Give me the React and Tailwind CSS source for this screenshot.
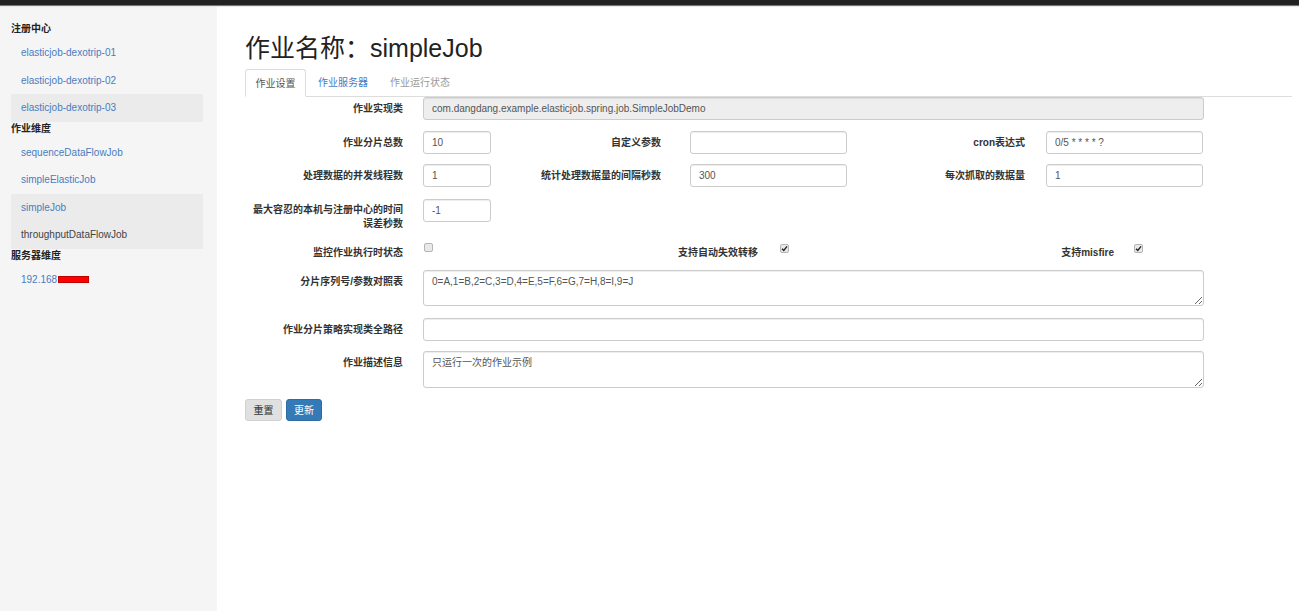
import React from "react";

const FONT = { fontFamily: '"Liberation Sans", "Noto Sans CJK SC", sans-serif' };

function NavItem({ children, active, dark }) {
  return (
    <div
      className={`h-[27.5px] flex items-center pl-[10px] text-[10px] ${active ? "bg-[#ebebeb]" : ""} ${dark ? "text-[#444]" : "text-[#4a7cbf]"}`}
    >
      {children}
    </div>
  );
}

function Heading({ children }) {
  return <div className="h-[17px] leading-[14px] text-[10px] font-bold text-[#222]">{children}</div>;
}

function Label({ w, children, className = "" }) {
  return (
    <div
      className={`shrink-0 text-right font-bold text-[10px] leading-[14px] text-[#333] pt-[5px] ${className}`}
      style={{ width: w }}
    >
      {children}
    </div>
  );
}

function Input({ w, value, disabled, className = "" }) {
  return (
    <div
      className={`h-[23px] shrink-0 rounded-[3px] border border-[#ccc] shadow-[inset_0_1px_1px_rgba(0,0,0,0.075)] px-[8px] flex items-center text-[10px] text-[#555] ${disabled ? "bg-[#eee]" : "bg-white"} ${className}`}
      style={{ width: w }}
    >
      {value}
    </div>
  );
}

function Textarea({ h, value }) {
  return (
    <textarea
      readOnly
      defaultValue={value}
      className="ml-[20px] w-[781px] shrink-0 rounded-[3px] border border-[#ccc] shadow-[inset_0_1px_1px_rgba(0,0,0,0.075)] px-[8px] pt-[4px] text-[10px] leading-[14px] text-[#555] bg-white outline-none"
      style={{ height: h, ...FONT }}
    />
  );
}

function Check({ checked }) {
  return (
    <div className="w-[9px] h-[9px] shrink-0 rounded-[2px] border border-[#b5b5b5] bg-[#e9e9e9] flex items-center justify-center">
      {checked && (
        <svg width="7" height="7" viewBox="0 0 10 10">
          <path d="M1.5 5.2 L4 7.8 L8.6 2" stroke="#222" strokeWidth="2" fill="none" />
        </svg>
      )}
    </div>
  );
}

export default function App() {
  return (
    <div className="w-[1299px] h-[611px] bg-white overflow-hidden flex flex-col" style={FONT}>
      <div className="h-[5px] bg-[#222] shrink-0" />
      <div className="h-[1px] bg-[#777] shrink-0" />
      <div className="h-[1px] bg-[#e8e8e8] shrink-0" />
      <div className="flex flex-1">
        {/* Sidebar */}
        <div className="w-[217px] shrink-0 bg-[#f5f5f5] pl-[11px] pr-[14px] pt-[15px]">
          <Heading>注册中心</Heading>
          <NavItem>elasticjob-dexotrip-01</NavItem>
          <NavItem>elasticjob-dexotrip-02</NavItem>
          <NavItem active>elasticjob-dexotrip-03</NavItem>
          <Heading>作业维度</Heading>
          <NavItem>sequenceDataFlowJob</NavItem>
          <NavItem>simpleElasticJob</NavItem>
          <NavItem active>simpleJob</NavItem>
          <NavItem active dark>throughputDataFlowJob</NavItem>
          <Heading>服务器维度</Heading>
          <NavItem>
            192.168
            <span className="inline-block w-[31px] h-[7px] bg-[#ff0000] border border-[#c00000] ml-[1px]" />
          </NavItem>
        </div>

        {/* Main */}
        <div className="flex-1 pl-[28px] pr-[7px]">
          <div className="pt-[26px] h-[62px] text-[25px] leading-[30px] text-[#222]">作业名称：simpleJob</div>
          {/* Tabs */}
          <div className="flex h-[28px] border-b border-[#ddd] text-[10px]">
            <div className="w-[61px] h-[28px] border border-[#ddd] border-b-white rounded-t-[3px] bg-white flex items-center justify-center text-[#555]">
              作业设置
            </div>
            <div className="ml-[12px] flex items-center text-[#4a7cbf]">作业服务器</div>
            <div className="ml-[22px] flex items-center text-[#999]">作业运行状态</div>
          </div>

          {/* Form */}
          <div className="flex flex-col">
            <div className="flex">
              <Label w={158}>作业实现类</Label>
              <Input w={781} className="ml-[20px]" disabled value="com.dangdang.example.elasticjob.spring.job.SimpleJobDemo" />
            </div>

            <div className="flex mt-[11px]">
              <Label w={158}>作业分片总数</Label>
              <Input w={68} className="ml-[20px]" value="10" />
              <Label w={170}>自定义参数</Label>
              <Input w={157} className="ml-[29px]" value="" />
              <Label w={178}>cron表达式</Label>
              <Input w={157} className="ml-[21px]" value="0/5 * * * * ?" />
            </div>

            <div className="flex mt-[10px]">
              <Label w={158}>处理数据的并发线程数</Label>
              <Input w={68} className="ml-[20px]" value="1" />
              <Label w={170}>统计处理数据量的间隔秒数</Label>
              <Input w={157} className="ml-[29px]" value="300" />
              <Label w={178}>每次抓取的数据量</Label>
              <Input w={157} className="ml-[21px]" value="1" />
            </div>

            <div className="flex mt-[12px] h-[32px]">
              <Label w={158} className="!pt-[4px]">
                最大容忍的本机与注册中心的时间
                <br />
                误差秒数
              </Label>
              <Input w={68} className="ml-[20px]" value="-1" />
            </div>

            <div className="flex mt-[12px] h-[17px]">
              <Label w={158} className="!pt-[3px]">监控作业执行时状态</Label>
              <div className="ml-[21px]">
                <Check />
              </div>
              <Label w={325} className="!pt-[3px]">支持自动失效转移</Label>
              <div className="ml-[22px] mt-[1px]">
                <Check checked />
              </div>
              <Label w={325} className="!pt-[3px]">支持misfire</Label>
              <div className="ml-[20px] mt-[1px]">
                <Check checked />
              </div>
            </div>

            <div className="flex mt-[10px]">
              <Label w={158}>分片序列号/参数对照表</Label>
              <Textarea h={36} value="0=A,1=B,2=C,3=D,4=E,5=F,6=G,7=H,8=I,9=J" />
            </div>

            <div className="flex mt-[12px]">
              <Label w={158}>作业分片策略实现类全路径</Label>
              <Input w={781} className="ml-[20px]" value="" />
            </div>

            <div className="flex mt-[10px]">
              <Label w={158}>作业描述信息</Label>
              <Textarea h={37} value="只运行一次的作业示例" />
            </div>

            <div className="flex mt-[11px] gap-[4px]">
              <div className="w-[37px] h-[22px] rounded-[3px] bg-[#e0e0e0] border border-[#d0d0d0] flex items-center justify-center text-[10px] text-[#333]">
                重置
              </div>
              <div className="w-[36px] h-[22px] rounded-[3px] bg-[#337ab7] border border-[#2e6da4] flex items-center justify-center text-[10px] text-white">
                更新
              </div>
            </div>
          </div>
        </div>
      </div>
    </div>
  );
}
